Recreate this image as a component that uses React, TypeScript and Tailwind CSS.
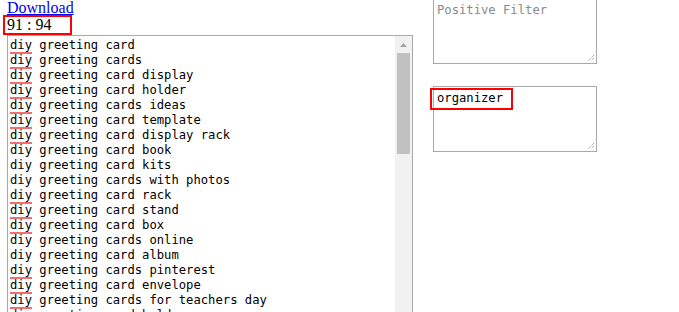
import React from 'react'

type Kw = { text: string; flagged: boolean }

const keywords: Kw[] = [
  { text: 'card', flagged: true },
  { text: 'cards', flagged: true },
  { text: 'card display', flagged: true },
  { text: 'card holder', flagged: true },
  { text: 'cards ideas', flagged: true },
  { text: 'card template', flagged: true },
  { text: 'card display rack', flagged: true },
  { text: 'card book', flagged: false },
  { text: 'card kits', flagged: false },
  { text: 'cards with photos', flagged: false },
  { text: 'card rack', flagged: true },
  { text: 'card stand', flagged: true },
  { text: 'card box', flagged: true },
  { text: 'cards online', flagged: false },
  { text: 'card album', flagged: false },
  { text: 'cards pinterest', flagged: true },
  { text: 'card envelope', flagged: true },
  { text: 'cards for teachers day', flagged: true },
  { text: 'card holders', flagged: false },
  { text: 'card ideas', flagged: false },
]

const mono = "font-['DejaVu_Sans_Mono','Liberation_Mono',monospace]"

function Grip() {
  return (
    <svg width="9" height="9" viewBox="0 0 9 9" className="absolute bottom-[1px] right-[1px]">
      <path d="M8 2 L2 8 M8 5 L5 8" stroke="#8a8a8a" strokeWidth="1" strokeDasharray="1 1" />
    </svg>
  )
}

function SmallBox({ children, className }: { children?: React.ReactNode; className?: string }) {
  return (
    <div className={`relative h-[66px] w-[164px] border border-[#a9a9a9] bg-white px-[3px] pt-[4px] text-[12.2px] leading-[15px] ${mono} ${className ?? ''}`}>
      {children}
      <Grip />
    </div>
  )
}

export default function App() {
  return (
    <div className="flex h-[312px] w-[679px] overflow-hidden bg-white">
      {/* left column */}
      <div className="flex w-[426px] flex-col pl-[7px]">
        <a href="#" className="h-[16px] font-['Liberation_Serif',serif] text-[16px] leading-[16px] text-[#0000ee] underline">
          Download
        </a>
        <div className="-ml-[4px] -mt-[1px] h-[20px] w-[69px] border-2 border-[#ff0000] pl-[2px] font-['Liberation_Serif',serif] text-[16px] leading-[16px] text-black">
          91 : 94
        </div>
        <div className="flex w-[406px] flex-1 border border-[#a9a9a9] bg-white">
          <div className={`flex-1 px-[2px] pt-[2px] text-[12.2px] leading-[15px] text-black ${mono}`}>
            {keywords.map((k, i) => (
              <div key={i} className="whitespace-pre">
                <span className={k.flagged ? 'underline decoration-[#f26d6d] decoration-2 underline-offset-[3px]' : ''}>diy</span>
                {' greeting ' + k.text}
              </div>
            ))}
          </div>
          <div className="flex w-[17px] flex-col items-center bg-[#f1f1f1]">
            <div className="flex h-[17px] items-center justify-center">
              <svg width="7" height="4" viewBox="0 0 7 4">
                <path d="M3.5 0 L7 4 L0 4 Z" fill="#a3a3a3" />
              </svg>
            </div>
            <div className="h-[101px] w-[13px] bg-[#c1c1c1]" />
          </div>
        </div>
      </div>

      {/* right column */}
      <div className="ml-[7px] flex flex-col gap-[22px] -mt-[2px]">
        <SmallBox>
          <span className="text-[#8a8a8a]">Positive Filter</span>
        </SmallBox>
        <SmallBox>
          <span className="text-black">organizer</span>
          <div className="absolute left-[-4px] top-[1px] h-[22px] w-[83px] border-2 border-[#ff0000]" />
        </SmallBox>
      </div>
    </div>
  )
}
